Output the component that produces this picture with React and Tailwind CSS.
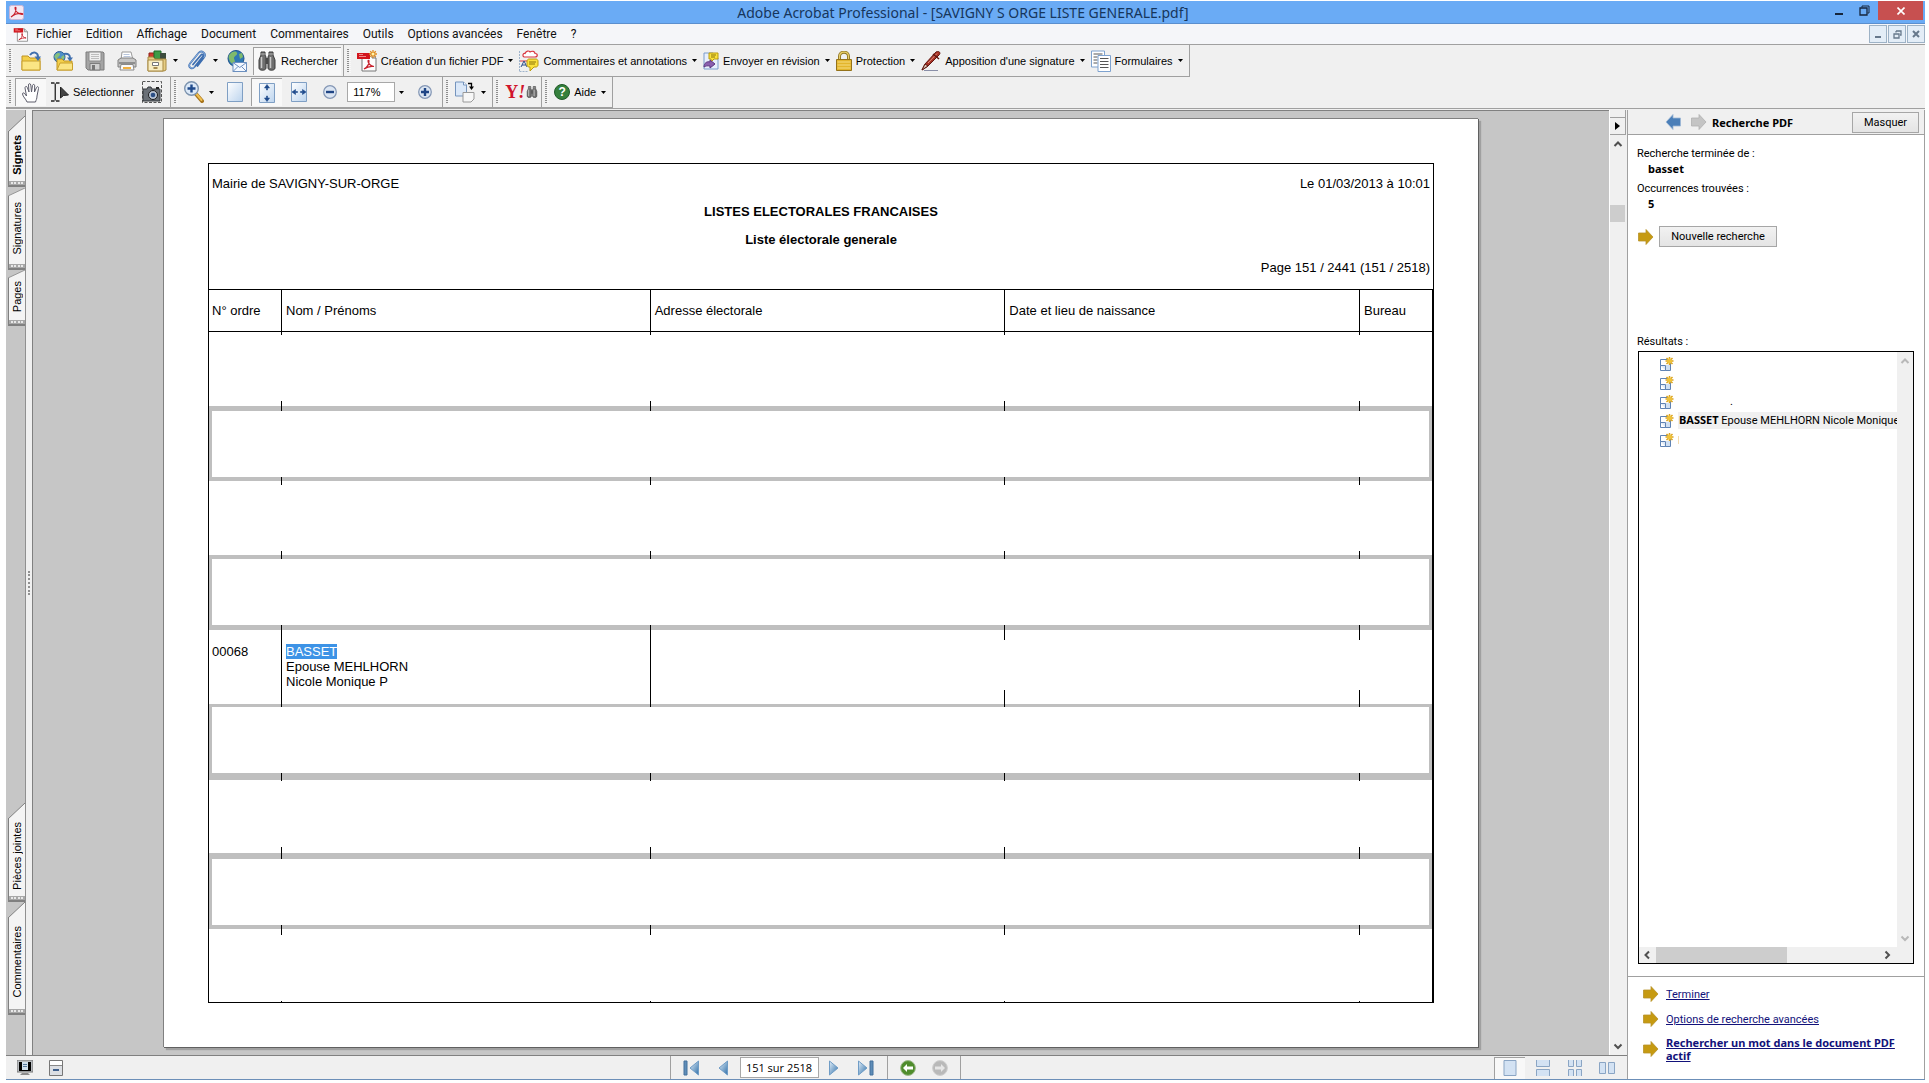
import React, { useState } from "react";

const menus = [
  "Fichier",
  "Edition",
  "Affichage",
  "Document",
  "Commentaires",
  "Outils",
  "Options avancées",
  "Fenêtre",
  "?",
];

const columns = [
  "N° ordre",
  "Nom / Prénoms",
  "Adresse électorale",
  "Date et lieu de naissance",
  "Bureau",
];

// heights are in pixels, top / bottom are the column marks or the grey bands
const rows = [
  { type: "blank", height: 74, top: 3, bottom: 5 },
  { type: "box", height: 66, top: 5, bottom: 4 },
  { type: "blank", height: 74, top: 4, bottom: 4 },
  { type: "box", height: 66, top: 4, bottom: 5 },
  { type: "record", height: 74, top: 10, bottom: 14 },
  { type: "box", height: 66, top: 3, bottom: 7 },
  { type: "blank", height: 73, top: 1, bottom: 6 },
  { type: "box", height: 66, top: 6, bottom: 4 },
  { type: "blank", height: 73, top: 6, bottom: 1 },
];

/* ---------- icons ---------- */

function Caret() {
  return (
    <svg className="w-[5px] h-[3px] shrink-0" viewBox="0 0 5 3">
      <path d="M0 0h5L2.5 3z" fill="#000" />
    </svg>
  );
}

function Grip() {
  return (
    <svg className="w-1 h-6 shrink-0" viewBox="0 0 4 24">
      <path d="M1 0v24" stroke="#8e8e8e" strokeWidth="2" strokeDasharray="1 1" />
      <path d="M3 1v23" stroke="#fff" strokeWidth="1" strokeDasharray="1 1" />
    </svg>
  );
}

function AcrobatIcon() {
  return (
    <svg className="w-[15px] h-[15px]" viewBox="0 0 15 15">
      <rect x=".5" y=".5" width="14" height="14" rx="2" fill="#f4e9f3" stroke="#c9b6d6" />
      <path
        d="M2 12c3-1.500 5-5 5-9 0-1-1-1-1 0 0 3 3 6 7 6.500 1 .1 1-.9 0-1-3-.3-8 1-11 3.500z"
        fill="none"
        stroke="#c8202c"
        strokeWidth="1.100"
      />
    </svg>
  );
}

function PdfIcon({ star, className }) {
  return (
    <svg className={className} viewBox="0 0 20 22">
      <path d="M5 4h10l4 4v13H5z" fill="#fdfdfd" stroke="#777" />
      <path d="M15 4v4h4" fill="#ddd" stroke="#777" />
      <path d="M0 3h13v6H0z" fill="#d2141c" />
      <path d="M2 4.500h4M2 6.500h7" stroke="#f08a8a" />
      <path
        d="M7 19c3-1.500 5-4.500 5-8 0-1-1-1-1 0 0 2.500 2.500 5 6 5.500-2.500-.5-7 .5-10 2.500z"
        fill="none"
        stroke="#c8202c"
        strokeWidth="1.200"
      />
      {star && (
        <g stroke="#e08a1e" strokeWidth="1.300">
          <path d="M16 0v8M12 4h8M13.200 1.200l5.600 5.600M18.800 1.200l-5.600 5.600" />
          <circle cx="16" cy="4" r="1.500" fill="#fff3a8" stroke="none" />
        </g>
      )}
    </svg>
  );
}

function FolderIcon({ globe }) {
  return (
    <svg className="w-5 h-5" viewBox="0 0 20 20">
      {globe && (
        <g>
          <circle cx="6.500" cy="6" r="5.500" fill="#4d8fc9" stroke="#2d5f96" />
          <path d="M3 3c2-1.500 4-1 4 .5S4 6 4 8 2 7 1.500 6 2 4 3 3zM8 6l3-2 .5 3-2 2z" fill="#86c07c" />
        </g>
      )}
      <path
        d={globe ? "M4 8h5l2 2h8v9H4z" : "M1 5h6l2 2h10v12H1z"}
        fill="#f3cf4a"
        stroke="#c09420"
      />
      <path
        d={globe ? "M4 19l3-7h12.500v7z" : "M1 19V10h18v9z"}
        fill="#fbe584"
        stroke="#c9a02c"
      />
      <path
        d={globe ? "M11 3c4-1 6 1 6 4" : "M9 4c3-4 8-3 8 2"}
        fill="none"
        stroke="#3f6fae"
        strokeWidth="2"
      />
      <path d={globe ? "M14 6.500h6l-3 4z" : "M13.500 5.500h6.500l-3 4.500z"} fill="#3f6fae" />
    </svg>
  );
}

function SaveIcon() {
  return (
    <svg className="w-5 h-5" viewBox="0 0 20 20">
      <path d="M1 1h17l1 1v17H3l-2-2z" fill="#a4a4a4" stroke="#7d7d7d" />
      <path d="M4 1h12v9H4z" fill="#efefef" stroke="#8a8a8a" />
      <path d="M6 3.500h8M6 5.500h8M6 7.500h8" stroke="#bdbdbd" />
      <path d="M5 12.500h10V19H5z" fill="#d0d0d0" stroke="#7d7d7d" />
      <path d="M7 14h3v5H7z" fill="#777" />
    </svg>
  );
}

function PrintIcon() {
  return (
    <svg className="w-5 h-5" viewBox="0 0 20 20">
      <path d="M5 1h9l2 8H4z" fill="#fff" stroke="#9a9a9a" />
      <path d="M6.500 3.500h6M6.500 5.500h7" stroke="#b9c6dc" />
      <path d="M1 9l3-2h12l3 2v7H1z" fill="#c7c7c7" stroke="#808080" />
      <path d="M2 11h16v2H2z" fill="#8f8f8f" />
      <path d="M4 13.500h12l1 5.500H3z" fill="#fafafa" stroke="#8a8a8a" />
      <path d="M6 16h8v2H6z" fill="#f0b040" />
    </svg>
  );
}

function OrganizerIcon() {
  return (
    <svg className="w-5 h-[22px]" viewBox="0 0 20 22">
      <path d="M2 3h7v6H2z" fill="#d23a2e" stroke="#8f2018" />
      <path d="M7 1h7v8H7z" fill="#3f9b46" stroke="#1f6b28" />
      <path d="M13 3h6v8h-6z" fill="#3b4a3c" />
      <path d="M1 7h5l2 2h11v11l-2 1H1z" fill="#e6cd84" stroke="#a88a42" />
      <path d="M1 10h15v11H1z" fill="#f7ecc2" stroke="#a88a42" />
      <path d="M5.500 12.500h6v3h-6z" fill="#fff" stroke="#777" />
      <path d="M6.500 18h4" stroke="#8a6a28" strokeWidth="1.500" />
    </svg>
  );
}

function ClipIcon() {
  return (
    <svg className="w-5 h-[22px]" viewBox="0 0 20 22" fill="none" strokeLinecap="round">
      <path
        d="M6 14.500l8-9.500c1.200-1.500 3 0 1.800 1.500L7.500 17c-2.500 3-7 0-4.500-3.500L11.500 3c3-3.500 8.500.5 5.500 4.500L10.500 16"
        stroke="#3d6eb0"
        strokeWidth="1.800"
      />
      <path
        d="M7.500 17c-2.500 3-7 0-4.500-3.500L11.500 3c3-3.500 8.500.5 5.500 4.500"
        stroke="#a9c8ef"
        strokeWidth=".7"
      />
    </svg>
  );
}

function GlobeMailIcon() {
  return (
    <svg className="w-5 h-[22px]" viewBox="0 0 20 22">
      <circle cx="9" cy="8.500" r="8" fill="#2f78b4" stroke="#1d5288" />
      <path d="M3 4c3-3 6-3 7-1s-3 3-3 5 2 3 0 5-4-1-5-4 0-4 1-5zM12 4l3-1 1 4-3 2z" fill="#7fba6c" />
      <path d="M6 12.500h13.500v9H6z" fill="#f4f8ff" stroke="#6b8fbf" />
      <path d="M6 12.500l6.750 5 6.750-5M6 21.500l5-5M19.500 21.500l-5-5" fill="none" stroke="#6b8fbf" />
    </svg>
  );
}

function BinocularsIcon({ className }) {
  return (
    <svg className={className} viewBox="0 0 18 20">
      <path d="M3 1h4v3l1 2v11c0 3-7 3-7 0V9l2-5z" fill="#6f6f6f" stroke="#3c3c3c" />
      <path d="M11 1h4v3l2 5v8c0 3-7 3-7 0V6l1-2z" fill="#6f6f6f" stroke="#3c3c3c" />
      <path d="M8 7h2v6H8z" fill="#4a4a4a" />
      <path d="M3.500 6v11M12.500 6v11" stroke="#c9c9c9" strokeWidth="1.500" />
      <path d="M3 3h4M11 3h4" stroke="#b0b0b0" />
    </svg>
  );
}

function CommentsIcon() {
  return (
    <svg className="w-5 h-[22px]" viewBox="0 0 20 22">
      <path d="M.5 1v20M.5 21.500H9" stroke="#9fb4cc" strokeDasharray="2 1" />
      <path
        d="M5 7c-2-1-1-4 1-3.500C7 .5 10 .5 11 2c2-1.500 5-.5 5 1.500 3 0 3 3.500 0 3.500z"
        fill="#fff"
        stroke="#d8323c"
        strokeWidth="1.200"
      />
      <path d="M1 11h10" stroke="#d8323c" />
      <path d="M2 17l3-6 3 6M3 15h4" fill="none" stroke="#2d4f8c" />
      <path d="M8 11c0-1 1-2 2-2h7c1 0 2 1 2 2v4c0 1-1 2-2 2h-2l-4 4v-4h-1c-1 0-2-1-2-2z" fill="#fbe23e" stroke="#b99a10" />
      <path d="M10 12h7M10 14h6" stroke="#8c7408" />
    </svg>
  );
}

function ReviewIcon() {
  return (
    <svg className="w-4 h-[18px]" viewBox="0 0 16 18">
      <path d="M1 1h9l5 5v11H1z" fill="#e8effb" stroke="#7b9ccc" />
      <path d="M6 1h9v6h-4l-3 3V7H6z" fill="#fae23c" stroke="#b99a10" />
      <path d="M8 3h5M8 5h4" stroke="#8c7408" />
      <path d="M1 15c0-4 3-6 6-5V8l5 4-5 4v-2c-3-.5-4 0-6 1z" fill="#8b5fae" stroke="#5c3580" />
    </svg>
  );
}

function LockIcon() {
  return (
    <svg className="w-4 h-5" viewBox="0 0 16 20">
      <path d="M3.500 9V5.500C3.500-.3 12.500-.3 12.500 5.500V9" fill="none" stroke="#8f7420" strokeWidth="3" />
      <path d="M3.500 9V5.500C3.500-.3 12.500-.3 12.500 5.500V9" fill="none" stroke="#e8cf6a" strokeWidth="1.200" />
      <path d="M.5 8.500h15v11H.5z" fill="#e3b52c" stroke="#94721a" />
      <path d="M1.500 11h13M1.500 14h13M1.500 17h13" stroke="#f7dd80" />
    </svg>
  );
}

function PenIcon() {
  return (
    <svg className="w-5 h-5" viewBox="0 0 20 20">
      <path d="M3 19.500h14" stroke="#8a8fa8" />
      <path d="M1 19l3-6L15 1c2-1.500 5 0 3.500 2.500L7 15z" fill="#a83226" stroke="#5f1610" />
      <path d="M1 19l3-6 3 2z" fill="#d8c8b8" stroke="#5f1610" />
      <path d="M7 12L16 2.500" stroke="#e09080" />
      <path d="M12 3l6 5" stroke="#5f1610" strokeWidth="1.500" />
    </svg>
  );
}

function FormsIcon() {
  return (
    <svg className="w-5 h-[22px]" viewBox="0 0 20 22">
      <path d="M.5 1h13v16H.5z" fill="#fff" stroke="#7ea2cf" />
      <path d="M2.500 4h9M2.500 7h4M2.500 10h4M2.500 13h4" stroke="#555" />
      <path d="M7 5.500h12.500v16H7z" fill="#fff" stroke="#7ea2cf" />
      <path d="M9 8.500h8.500M9 11.500h8.500M9 14.500h8.500M9 17.500h8.500" stroke="#555" />
    </svg>
  );
}

function HandIcon() {
  return (
    <svg className="w-[18px] h-5" viewBox="0 0 18 20">
      <path
        d="M5 19c-1-3-4-5-4.500-8 0-1.500 1.500-1.500 2.500 0l1.500 2L3 5c0-2 2-2 2.300-.5L7 9l-.5-7c0-1.800 2-1.800 2.300 0L9.500 9l1-6.500c.3-1.600 2.200-1.400 2.200.3L12.500 9l2-4.500c.7-1.500 2.500-.8 2 1L15 13c0 3-1 4-1.500 6z"
        fill="#fff"
        stroke="#5d5d6b"
      />
    </svg>
  );
}

function SelectIcon() {
  return (
    <svg className="w-[18px] h-5" viewBox="0 0 18 20">
      <path d="M0 1h3.500M5 1h3.500M0 19h3.500M5 19h3.500M4.250 1.500v17" stroke="#222" strokeWidth="1.300" />
      <path d="M9.500 5v11l3-2.500 5-.5z" fill="#444" stroke="#222" />
    </svg>
  );
}

function CameraIcon() {
  return (
    <svg className="w-5 h-[22px]" viewBox="0 0 20 22">
      <path d="M.5.500h19v21H.5z" fill="none" stroke="#555" strokeDasharray="3 1.500" />
      <path d="M1 8h4l1-2h3l1 2h8v12H1z" fill="#6a7077" stroke="#33363b" />
      <path d="M14 6h3v2h-3z" fill="#222" />
      <circle cx="11" cy="14" r="4.500" fill="#b8c4d4" stroke="#1c1c1c" />
      <circle cx="11" cy="14" r="2.300" fill="#2b4f86" />
    </svg>
  );
}

function MagnifierIcon() {
  return (
    <svg className="w-5 h-[22px]" viewBox="0 0 20 22">
      <path d="M12 13l6 7" stroke="#a8741c" strokeWidth="4" strokeLinecap="round" />
      <path d="M12.500 13l5 6" stroke="#f0c050" strokeWidth="2" strokeLinecap="round" />
      <circle cx="7.500" cy="7.500" r="6.800" fill="#dce9f8" stroke="#7c93ae" strokeWidth="1.400" />
      <path d="M7.500 3.500v8M3.500 7.500h8" stroke="#1f4a8c" strokeWidth="2.400" />
    </svg>
  );
}

function PageIcon({ kind }) {
  return (
    <svg className="w-4 h-5" viewBox="0 0 16 20">
      <defs>
        <linearGradient id={`pg-${kind}`} x1="0" y1="0" x2="1" y2="1">
          <stop offset="0" stopColor="#ffffff" />
          <stop offset="1" stopColor="#bcd4ee" />
        </linearGradient>
      </defs>
      <path d="M.5.500h15v19H.5z" fill={`url(#pg-${kind})`} stroke="#7f9fc4" />
      {kind === "height" && (
        <path d="M8 1.500L5.500 5h2v2h1V5h2zM8 18.500L5.500 15h2v-2h1v2h2z" fill="#1f4a8c" stroke="#1f4a8c" strokeWidth=".6" />
      )}
      {kind === "width" && (
        <path d="M1 10l3.500-2.500v2h2v1h-2v2zM15 10l-3.500-2.500v2h-2v1h2v2z" fill="#1f4a8c" stroke="#1f4a8c" strokeWidth=".6" />
      )}
    </svg>
  );
}

function RoundSign({ plus }) {
  return (
    <svg className="w-[14px] h-[14px]" viewBox="0 0 14 14">
      <circle cx="7" cy="7" r="6.300" fill="#dbe5f2" stroke="#8396b4" strokeWidth="1.200" />
      <path d={plus ? "M3 7h8M7 3v8" : "M3 7h8"} stroke="#1f4585" strokeWidth="2.400" />
    </svg>
  );
}

function RotateIcon() {
  return (
    <svg className="w-5 h-[22px]" viewBox="0 0 20 22">
      <path d="M.5 1h8l3 3v11H.5z" fill="#dbe8f8" stroke="#7594bd" />
      <path d="M8.500 1v3h3" fill="#fff" stroke="#7594bd" />
      <path d="M8 11.500h11V18l-3 3H8z" fill="#f7f7f7" stroke="#999" />
      <path d="M13 2.500h3.500v4" fill="none" stroke="#000" strokeWidth="1.300" />
      <path d="M14 5.500h5L16.500 9z" fill="#000" />
    </svg>
  );
}

function HelpIcon() {
  return (
    <span className="w-4 h-4 rounded-full bg-[#35803c] border border-[#1f5a28] text-white font-bold text-xs leading-4 flex items-center justify-center">
      ?
    </span>
  );
}

function ArrowIcon({ color, edge, left, className }) {
  return (
    <svg className={className} viewBox="0 0 16 16">
      <path
        d={left ? "M1 8l7-7.500V4h7.500v8H8v3.500z" : "M15 8L8 .500V4H.500v8H8v3.500z"}
        fill={color}
        stroke={edge}
        strokeWidth=".8"
      />
    </svg>
  );
}

function GoldArrow() {
  return (
    <ArrowIcon className="w-4 h-4 shrink-0" color="#c69a12" edge="#b8922a" />
  );
}

function Chevron({ dir, color = "#505050" }) {
  const paths = {
    up: "M1.500 7L5 3.500 8.500 7",
    down: "M1.500 3.500L5 7l3.500-3.500",
    left: "M7 1.500L3.500 5 7 8.500",
    right: "M3.500 1.500L7 5 3.500 8.500",
  };
  return (
    <svg className="w-[10px] h-[10px]" viewBox="0 0 10 10">
      <path d={paths[dir]} fill="none" stroke={color} strokeWidth="2" />
    </svg>
  );
}

function ResultIcon() {
  return (
    <svg className="w-[14px] h-[14px] shrink-0" viewBox="0 0 14 14">
      <path d="M.5 2.500h10v11H.5z" fill="#fff" stroke="#5f83b4" />
      <path d="M.5 8.500h5v5" fill="#dfe9f6" stroke="#5f83b4" />
      <path d="M6 8h4v5H6z" fill="#cfdff2" />
      <path d="M9.500 0v8M5.500 4h8M6.500 1l6 6M12.500 1l-6 6" stroke="#dba21c" strokeWidth="1.500" />
      <circle cx="9.500" cy="4" r="2.500" fill="#eec23a" />
    </svg>
  );
}

function NavIcon({ kind }) {
  const back = kind === "first" || kind === "prev";
  const bar = kind === "first" || kind === "last";
  return (
    <svg className={bar ? "w-4 h-4" : "w-[10px] h-4"} viewBox={bar ? "0 0 16 16" : "0 0 10 16"}>
      <defs>
        <linearGradient id={`nav-${kind}`} x1="0" y1="0" x2="1" y2="1">
          <stop offset="0" stopColor="#e4f0fa" />
          <stop offset="1" stopColor="#2f6fa8" />
        </linearGradient>
      </defs>
      {kind === "first" && <path d="M1 1h3v14H1z" fill="#5f8db8" stroke="#44709c" />}
      {kind === "last" && <path d="M12 1h3v14h-3z" fill="#5f8db8" stroke="#44709c" />}
      <path
        d={
          back
            ? kind === "first"
              ? "M15.500 1v14L7 8z"
              : "M9.500 1v14L1 8z"
            : "M.5 1v14L9 8z"
        }
        fill={`url(#nav-${kind})`}
        stroke="#6f9cc6"
      />
    </svg>
  );
}

function HistoryIcon({ back }) {
  return (
    <svg className="w-4 h-4" viewBox="0 0 16 16">
      <circle cx="8" cy="8" r="7.400" fill={back ? "#4f8c2c" : "#b9b9b9"} stroke={back ? "#9cb88a" : "#cfcfcf"} />
      <path
        d={back ? "M3 8l4-4v2.500h6v3H7V12z" : "M13 8L9 4v2.500H3v3h6V12z"}
        fill={back ? "#fff" : "#e6e6e6"}
      />
    </svg>
  );
}

function ViewIcon({ kind }) {
  const shapes = {
    single: ["M2 .500h12v15H2z"],
    continuous: ["M1.500 0v6.500h13V0", "M1.500 16V9.500h13V16"],
    facingContinuous: [
      "M1.500 0v6.500h5V0",
      "M9.500 0v6.500h5V0",
      "M1.500 16V9.500h5V16",
      "M9.500 16V9.500h5V16",
    ],
    facing: ["M.500 2.500h6v11h-6z", "M9.500 2.500h6v11h-6z"],
  };
  return (
    <svg className="w-4 h-4" viewBox="0 0 16 16">
      {shapes[kind].map((d) => (
        <path key={d} d={d} fill="#d3e2f3" stroke="#8aa5c4" />
      ))}
    </svg>
  );
}

/* ---------- window parts ---------- */

function TitleBar() {
  return (
    <header className="h-[23px] flex items-start bg-[#6aabf5] border-b border-[#5b8fce]">
      <div className="w-[93px] pl-[3px] pt-1">
        <AcrobatIcon />
      </div>
      <h1 className="flex-1 text-center font-['Noto_Sans',sans-serif] text-sm leading-[23px] text-[#16365c]">
        Adobe Acrobat Professional - [SAVIGNY S ORGE LISTE GENERALE.pdf]
      </h1>
      <div className="flex items-start">
        <button aria-label="Réduire" className="w-6 h-[18px] flex items-end justify-center pb-1">
          <span className="w-2 h-0.5 bg-[#16263c]" />
        </button>
        <button aria-label="Restaurer" className="w-[27px] h-[18px] flex items-center justify-center">
          <svg className="w-[11px] h-[11px]" viewBox="0 0 11 11">
            <path d="M3 2.500V1h7v7H8.500" fill="none" stroke="#16263c" />
            <path d="M1 3h7v7H1z" fill="none" stroke="#16263c" strokeWidth="1.300" />
          </svg>
        </button>
        <button aria-label="Fermer" className="w-[45px] h-[19px] mr-0.5 bg-[#c75050] flex items-center justify-center">
          <svg className="w-2 h-2" viewBox="0 0 8 8">
            <path d="M.5.500l7 7M7.500.500l-7 7" stroke="#fff" strokeWidth="1.600" />
          </svg>
        </button>
      </div>
    </header>
  );
}

function MenuBar() {
  const box =
    "w-[18px] h-[18px] border border-[#9db2c6] bg-[#e3edf7] flex items-center justify-center";
  return (
    <nav className="h-[21px] flex items-center bg-[#f5f6f9] border-b border-[#a0a0a0] font-['Roboto',sans-serif] text-xs text-[#111]">
      <PdfIcon className="w-4 h-4 ml-[7px] mr-[7px]" />
      <div className="flex gap-[14px]">
        {menus.map((m) => (
          <button key={m}>{m}</button>
        ))}
      </div>
      <div className="ml-auto flex gap-px">
        <button aria-label="Réduire le document" className={box}>
          <span className="w-1.5 h-0.5 mt-1.5 bg-[#66788c]" />
        </button>
        <button aria-label="Restaurer le document" className={box}>
          <svg className="w-[9px] h-[9px]" viewBox="0 0 9 9">
            <path d="M3 1h5v4H7M3 2.500V1M1 4h5v4H1z" fill="none" stroke="#66788c" strokeWidth="1.300" />
          </svg>
        </button>
        <button aria-label="Fermer le document" className={box}>
          <svg className="w-2 h-2" viewBox="0 0 8 8">
            <path d="M1 1l6 6M7 1L1 7" stroke="#66788c" strokeWidth="2" />
          </svg>
        </button>
      </div>
    </nav>
  );
}

function Task({ icon, label }) {
  return (
    <button className="flex items-center gap-[5px]">
      <span className="flex items-center gap-1">
        {icon}
        {label}
      </span>
      <Caret />
    </button>
  );
}

function Toolbars({ zoom, setZoom }) {
  const group = "h-full flex items-center pl-[3px] border-r border-b border-[#a0a0a0]";
  const pressed = "border-t border-l border-[#a0a0a0] bg-[#f8f8f8]";
  return (
    <div className="bg-[#f0f0f0] text-[11px] leading-4 text-black">
      <div className="h-8 flex">
        <div className={`${group} pr-0.5`}>
          <Grip />
          <div className="flex items-center gap-3 ml-2">
            <button aria-label="Ouvrir"><FolderIcon /></button>
            <button aria-label="Ouvrir page Web"><FolderIcon globe /></button>
            <button aria-label="Enregistrer"><SaveIcon /></button>
            <button aria-label="Imprimer"><PrintIcon /></button>
          </div>
          <div className="flex items-center gap-[9px] ml-[10px]">
            <button aria-label="Organiseur" className="flex items-center gap-1.5">
              <OrganizerIcon />
              <Caret />
            </button>
            <button aria-label="Joindre" className="flex items-center gap-1.5">
              <ClipIcon />
              <Caret />
            </button>
            <button aria-label="Courrier"><GlobeMailIcon /></button>
          </div>
          <button className={`${pressed} h-7 ml-1.5 pl-1 pr-[3px] flex items-center gap-[5px]`}>
            <BinocularsIcon className="w-[18px] h-5" />
            Rechercher
          </button>
        </div>
        <div className={`${group} pr-1.5`}>
          <Grip />
          <div className="flex items-center gap-1.5 ml-1.5">
            <Task icon={<PdfIcon star className="w-5 h-[22px]" />} label="Création d'un fichier PDF" />
            <Task icon={<CommentsIcon />} label="Commentaires et annotations" />
            <Task icon={<ReviewIcon />} label="Envoyer en révision" />
            <Task icon={<LockIcon />} label="Protection" />
            <Task icon={<PenIcon />} label="Apposition d'une signature" />
            <Task icon={<FormsIcon />} label="Formulaires" />
          </div>
        </div>
      </div>
      <div className="h-8 flex border-b border-[#a0a0a0]">
        <div className={`${group} pr-2`}>
          <Grip />
          <button aria-label="Main" className={`${pressed} w-[31px] h-7 ml-0.5 flex items-center justify-center`}>
            <HandIcon />
          </button>
          <button className="flex items-center gap-1 ml-[5px]">
            <SelectIcon />
            Sélectionner
          </button>
          <button aria-label="Instantané" className="ml-2"><CameraIcon /></button>
        </div>
        <div className={`${group} pr-[10px]`}>
          <Grip />
          <button aria-label="Zoom avant" className="flex items-center gap-[5px] ml-1.5">
            <MagnifierIcon />
            <Caret />
          </button>
          <button aria-label="Taille réelle" className="ml-[13px]"><PageIcon kind="plain" /></button>
          <button aria-label="Taille écran" className={`${pressed} w-[31px] h-7 ml-2 flex items-center justify-center`}>
            <PageIcon kind="height" />
          </button>
          <button aria-label="Pleine largeur" className="ml-[9px]"><PageIcon kind="width" /></button>
          <button aria-label="Réduire le zoom" className="ml-4"><RoundSign /></button>
          <input
            aria-label="Zoom"
            className="w-12 h-5 ml-[10px] pl-[5px] border border-[#a8a8a8] bg-white text-[11px]"
            value={zoom}
            onChange={(e) => setZoom(e.target.value)}
          />
          <button aria-label="Choix du zoom" className="ml-1 h-4 flex items-center"><Caret /></button>
          <button aria-label="Augmenter le zoom" className="ml-[14px]"><RoundSign plus /></button>
        </div>
        <div className={`${group} pr-1.5`}>
          <Grip />
          <button aria-label="Rotation" className="flex items-center gap-1.5 ml-[5px]">
            <RotateIcon />
            <Caret />
          </button>
        </div>
        <div className={`${group} pr-0.5`}>
          <Grip />
          <button aria-label="Yahoo" className="flex items-center ml-[5px]">
            <span className="font-['Liberation_Serif',serif] font-bold text-lg leading-5 text-[#d0142c]">
              Y<i>!</i>
            </span>
            <BinocularsIcon className="w-[14px] h-3" />
          </button>
        </div>
        <div className={`${group} pr-1.5`}>
          <Grip />
          <span className="ml-[5px]">
            <Task icon={<HelpIcon />} label="Aide" />
          </span>
        </div>
      </div>
    </div>
  );
}

function SideTab({ label, bold, steep, className = "" }) {
  return (
    <button className={`w-[17px] ml-0.5 flex flex-col ${className}`}>
      <svg className={steep ? "w-[17px] h-4 shrink-0" : "w-[17px] h-2 shrink-0"} viewBox="0 0 17 16" preserveAspectRatio="none">
        <path d="M0 16L17 0v16z" fill="#f4f4f4" />
        <path d="M0 16L17 0" stroke="#808080" />
      </svg>
      <span className="w-full flex-1 flex items-center justify-center pb-1 bg-[#f4f4f4] border-l border-[#808080]">
        <span className={`[writing-mode:vertical-rl] rotate-180 text-[11px] leading-4 ${bold ? "font-bold" : ""}`}>
          {label}
        </span>
      </span>
      <span className="w-full h-1.5 shrink-0 flex items-center justify-center bg-[#a8a8a8] border-b-2 border-l border-[#808080]">
        <span className="w-3 border-t-2 border-dotted border-[#e8e8e8]" />
      </span>
    </button>
  );
}

function SideRail() {
  return (
    <aside className="w-5 shrink-0 flex flex-col bg-[#c6c6c6] border-r border-[#909090] pt-1.5 pb-10">
      <SideTab label="Signets" bold steep className="h-[71px]" />
      <SideTab label="Signatures" className="h-[82px] mt-px" />
      <SideTab label="Pages" className="h-14" />
      <SideTab label="Pièces jointes" steep className="h-[99px] mt-auto" />
      <SideTab label="Commentaires" steep className="h-[113px]" />
    </aside>
  );
}

function Marks({ row, full, children }) {
  if (full) {
    return (
      <div className="border-l border-black pl-1" style={{ height: row.height }}>
        {children}
      </div>
    );
  }
  return (
    <div className="flex flex-col justify-between" style={{ height: row.height }}>
      <span className="w-px bg-black" style={{ height: row.top }} />
      <span className="w-px bg-black" style={{ height: row.bottom }} />
    </div>
  );
}

function Band({ height }) {
  return (
    <tr>
      {columns.map((c, i) => (
        <td key={c} className="p-0 bg-[#bfbfbf]">
          <div className={i > 0 ? "w-px bg-black" : ""} style={{ height }} />
        </td>
      ))}
    </tr>
  );
}

function VoterRow({ row }) {
  if (row.type === "box") {
    return (
      <>
        <Band height={row.top} />
        <tr>
          <td colSpan={5} className="p-0">
            <div className="border-x-3 border-[#bfbfbf]" style={{ height: row.height }} />
          </td>
        </tr>
        <Band height={row.bottom} />
      </>
    );
  }
  if (row.type === "record") {
    return (
      <tr className="align-top">
        <td className="p-0 pl-[3px] pt-[14px] leading-[15px]">00068</td>
        <td className="p-0">
          <Marks row={row} full>
            <div className="pt-[14px] leading-[15px]">
              <mark className="bg-[#3d93e6] text-white">BASSET</mark>
              <br />
              Epouse MEHLHORN
              <br />
              Nicole Monique P
            </div>
          </Marks>
        </td>
        <td className="p-0"><Marks row={row} full /></td>
        <td className="p-0"><Marks row={row} /></td>
        <td className="p-0"><Marks row={row} /></td>
      </tr>
    );
  }
  return (
    <tr>
      <td className="p-0" />
      {columns.slice(1).map((c) => (
        <td key={c} className="p-0">
          <Marks row={row} />
        </td>
      ))}
    </tr>
  );
}

function PdfPage() {
  return (
    <article className="bg-white border-t border-l border-[#808080] pt-11 pb-11 pl-11 pr-11 text-[13px] text-black shadow-[1px_1px_0_#606060,3px_3px_1px_#a0a0a0]">
      <div className="border border-black">
        <div className="pt-1.5 pb-[7px] px-[3px] leading-7">
          <div className="flex justify-between">
            <span>Mairie de SAVIGNY-SUR-ORGE</span>
            <span>Le 01/03/2013 à 10:01</span>
          </div>
          <h2 className="text-center font-bold">LISTES ELECTORALES FRANCAISES</h2>
          <h3 className="text-center font-bold">Liste électorale generale</h3>
          <p className="text-right">Page 151 / 2441 (151 / 2518)</p>
        </div>
        <table className="w-full table-fixed border-separate border-spacing-0 border-t border-r border-black">
          <colgroup>
            <col className="w-[72px]" />
            <col />
            <col className="w-[29%]" />
            <col className="w-[29%]" />
            <col className="w-[73px]" />
          </colgroup>
          <thead>
            <tr>
              {columns.map((c, i) => (
                <th
                  key={c}
                  className={
                    i === 0
                      ? "h-[42px] p-0 pl-[3px] text-left font-normal border-b border-black"
                      : "h-[42px] p-0 pl-1 text-left font-normal border-b border-l border-black"
                  }
                >
                  {c}
                </th>
              ))}
            </tr>
          </thead>
          <tbody>
            {rows.map((row, i) => (
              <VoterRow key={i} row={row} />
            ))}
          </tbody>
        </table>
      </div>
    </article>
  );
}

function PageScroll() {
  return (
    <div className="w-[18px] shrink-0 flex flex-col items-center pr-px bg-[#f0f0f0] border-l border-white">
      <div className="w-full h-2 border-b border-r border-[#a0a0a0]" />
      <button aria-label="Afficher le volet" className="w-full h-[17px] flex items-center justify-center border-b border-r border-[#a0a0a0]">
        <svg className="w-[5px] h-2" viewBox="0 0 5 8">
          <path d="M0 0v8l5-4z" />
        </svg>
      </button>
      <button aria-label="Défiler vers le haut" className="mt-1"><Chevron dir="up" /></button>
      <div className="w-full flex-1 pt-14 pr-px">
        <div className="h-[17px] bg-[#cdcdcd]" />
      </div>
      <button aria-label="Défiler vers le bas" className="mb-1"><Chevron dir="down" /></button>
    </div>
  );
}

function StatusBar({ page, setPage }) {
  return (
    <footer className="h-6 flex justify-between bg-[#f0f0f0] border-t border-[#808080]">
      <div className="flex-1 flex items-center gap-4 pl-[11px]">
        <button aria-label="Plein écran">
          <svg className="w-4 h-4" viewBox="0 0 16 16">
            <path d="M0 0h16v12H0z" fill="#b8bcc0" stroke="#777" />
            <path d="M2 2h12v9H2z" fill="#000" />
            <path d="M5 2h6v8H5z" fill="#cfe0ee" />
            <path d="M6 4.500h4M6 6.500h4" stroke="#56789a" />
            <path d="M3 15h10l-2-2H5z" fill="#8c8c8c" />
          </svg>
        </button>
        <button aria-label="Masquer les barres">
          <svg className="w-[14px] h-4" viewBox="0 0 14 16">
            <path d="M.5.500h13v15H.5z" fill="#dcdfe4" stroke="#777" />
            <path d="M1 1h12v4H1z" fill="#fff" />
            <path d="M1 5.500h12" stroke="#888" />
            <path d="M4 10h6" stroke="#3f5f8c" strokeWidth="2" />
          </svg>
        </button>
      </div>
      <div className="flex items-center border-l border-[#a0a0a0] mr-0.5">
        <button aria-label="Première page" className="ml-3"><NavIcon kind="first" /></button>
        <button aria-label="Page précédente" className="ml-[19px]"><NavIcon kind="prev" /></button>
        <input
          aria-label="Page"
          className="w-[79px] h-[21px] ml-3 border border-[#a8a8a8] bg-white text-center font-['Open_Sans',sans-serif] text-[11px]"
          value={page}
          onChange={(e) => setPage(e.target.value)}
        />
        <button aria-label="Page suivante" className="ml-[10px]"><NavIcon kind="next" /></button>
        <button aria-label="Dernière page" className="ml-[19px]"><NavIcon kind="last" /></button>
        <div className="h-full flex items-center gap-4 ml-[13px] px-3 border-x border-[#a0a0a0]">
          <button aria-label="Vue précédente"><HistoryIcon back /></button>
          <button aria-label="Vue suivante"><HistoryIcon /></button>
        </div>
      </div>
      <div className="flex-1 flex items-center justify-end gap-4 pr-3">
        <button aria-label="Une seule page" className="w-[31px] h-[22px] -mr-1.5 border-t border-l border-[#a0a0a0] bg-[#f8f8f8] flex items-center justify-center">
          <ViewIcon kind="single" />
        </button>
        <button aria-label="Continu"><ViewIcon kind="continuous" /></button>
        <button aria-label="Continu - Pages en vis-à-vis"><ViewIcon kind="facingContinuous" /></button>
        <button aria-label="Pages en vis-à-vis"><ViewIcon kind="facing" /></button>
      </div>
    </footer>
  );
}

function ResultList() {
  return (
    <div className="flex-1 ml-[10px] mr-[10px] mt-0.5 flex flex-col border border-black">
      <div className="flex-1 flex min-h-0">
        <ul className="flex-1 min-w-0 pt-0.5 pl-[21px]">
          <li className="h-[19px] flex items-center"><ResultIcon /></li>
          <li className="h-[19px] flex items-center"><ResultIcon /></li>
          <li className="h-[19px] flex items-center">
            <ResultIcon />
            <span className="ml-14">.</span>
          </li>
          <li className="h-[19px] flex items-center">
            <ResultIcon />
            <a href="#resultat" className="flex-1 ml-1 pl-px bg-[#f0f0f0] whitespace-nowrap leading-4">
              <b className="font-['Noto_Sans',sans-serif]">BASSET</b> Epouse MEHLHORN Nicole Monique P
            </a>
          </li>
          <li className="h-[19px] flex items-center">
            <ResultIcon />
            <span className="w-px h-2 ml-1 bg-[#f5dcae]" />
          </li>
        </ul>
        <div className="w-4 flex flex-col items-center justify-between bg-[#f0f0f0] py-1">
          <Chevron dir="up" color="#b8b8b8" />
          <Chevron dir="down" color="#b8b8b8" />
        </div>
      </div>
      <div className="h-4 flex items-center bg-[#f0f0f0] pl-[3px] pr-[21px]">
        <Chevron dir="left" />
        <div className="flex-1 h-4 ml-1">
          <div className="w-[58%] h-4 bg-[#cdcdcd]" />
        </div>
        <Chevron dir="right" />
      </div>
    </div>
  );
}

function SearchPanel() {
  const button = "border border-[#a6a6a6] bg-linear-to-b from-[#f2f2f2] to-[#e4e4e4]";
  const link = "text-[#12127a] underline";
  const strong = "font-['Noto_Sans',sans-serif] font-bold";
  return (
    <aside className="w-[298px] shrink-0 flex flex-col bg-white border-x border-[#a0a0a0] font-['Roboto',sans-serif] text-[11px] leading-[15px] text-black">
      <div className="h-[25px] flex items-center bg-[#f0f0f0] border-b border-[#a0a0a0] pl-[37px] pr-[5px]">
        <button aria-label="Précédent">
          <ArrowIcon left className="w-4 h-4" color="#4b7fb8" edge="#9db8d6" />
        </button>
        <button aria-label="Suivant" className="ml-[10px]">
          <ArrowIcon className="w-4 h-4" color="#c4c4c4" edge="#b0b0b0" />
        </button>
        <h2 className={`${strong} ml-[5px]`}>Recherche PDF</h2>
        <button className={`${button} w-[67px] h-[21px] ml-auto`}>Masquer</button>
      </div>
      <dl className="pl-[9px] pt-[11px]">
        <dt>Recherche terminée de :</dt>
        <dd className={`${strong} pl-[11px]`}>basset</dd>
        <dt className="mt-[5px]">Occurrences trouvées :</dt>
        <dd className={`${strong} pl-[11px]`}>5</dd>
      </dl>
      <div className="flex items-center gap-[5px] pl-[10px] mt-[15px]">
        <GoldArrow />
        <button className={`${button} w-[118px] h-[21px]`}>Nouvelle recherche</button>
      </div>
      <p className="pl-[9px] mt-[87px]">Résultats :</p>
      <ResultList />
      <div className="flex flex-col gap-[9px] mt-3 pt-[9px] pb-[17px] pl-[15px] pr-4 border-t border-[#a0a0a0]">
        <div className="flex items-center gap-[7px]">
          <GoldArrow />
          <a href="#terminer" className={link}>Terminer</a>
        </div>
        <div className="flex items-center gap-[7px]">
          <GoldArrow />
          <a href="#options" className={link}>Options de recherche avancées</a>
        </div>
        <div className="flex items-center gap-[7px]">
          <GoldArrow />
          <a href="#rechercher" className={`${link} ${strong} leading-[13px]`}>
            Rechercher un mot dans le document PDF actif
          </a>
        </div>
      </div>
    </aside>
  );
}

export default function App() {
  const [zoom, setZoom] = useState("117%");
  const [page, setPage] = useState("151 sur 2518");

  return (
    <div className="min-h-screen flex flex-col bg-white pt-px pl-1.5 pr-1 pb-[3px] font-['Liberation_Sans',Arial,sans-serif]">
      <TitleBar />
      <MenuBar />
      <Toolbars zoom={zoom} setZoom={setZoom} />
      <div className="flex-1 flex pt-px bg-[#f0f0f0] border-b border-[#6c8fb8]">
        <div className="flex-1 min-w-0 flex flex-col">
          <div className="flex-1 flex">
            <SideRail />
            <div className="w-1.5 shrink-0 flex items-center bg-[#f0f0f0]">
              <span className="h-6 ml-0.5 border-l-2 border-dotted border-[#909090]" />
            </div>
            <main className="flex-1 min-w-0 bg-[#c6c6c6] border-t border-l border-[#808080] pt-[7px] pb-2 pl-[130px] pr-[131px]">
              <PdfPage />
            </main>
            <PageScroll />
          </div>
          <StatusBar page={page} setPage={setPage} />
        </div>
        <SearchPanel />
      </div>
    </div>
  );
}
